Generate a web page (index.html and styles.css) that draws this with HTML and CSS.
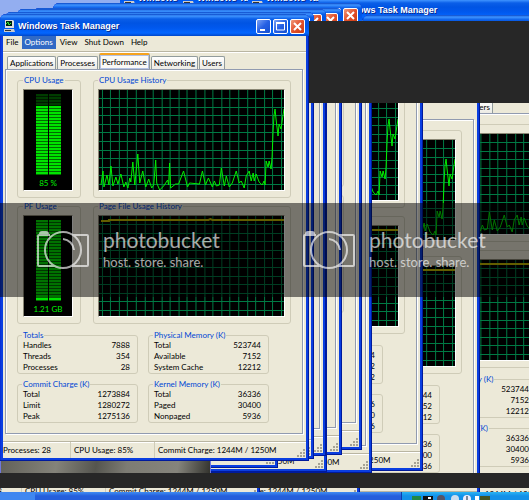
FILE: index.html
```html
<!DOCTYPE html>
<html lang="en">
<head>
<meta charset="utf-8">
<title>Windows Task Manager</title>
<link rel="stylesheet" href="styles.css">
</head>
<body>
<main class="desktop" id="desktop">
  <div class="windows" id="windows"></div>
  <div class="block block-top"></div>
  <div class="block block-bottom"></div>
  <footer class="taskbar"><div class="task"></div><div class="tray">
    <svg width="80" height="5" viewBox="0 0 80 5" aria-hidden="true"><rect x="2" y="1" width="9" height="4" fill="#284"/><path d="M13 1h10v4H13z" fill="#111"/><path d="M18 2h3v2h-3z" fill="#fff"/><circle cx="31" cy="4" r="4" fill="#556"/><circle cx="45" cy="4" r="4" fill="#cde"/><circle cx="57" cy="4" r="4" fill="#eef"/><path d="M57 1v4" stroke="#123"/><path d="M65 5V1h4v4" fill="#fff"/><path d="M70 1h10v4H70z" fill="#452"/></svg>
  </div></footer>
  <section class="watermark">
    <div class="brand"></div>
    <div class="brand"></div>
  </section>
</main>

<template id="photo-template"><div class="photo"></div></template>

<template id="brand-template">
  <svg class="camera" width="52" height="40" viewBox="0 0 52 40" fill="none" stroke="#fff" stroke-width="2" aria-hidden="true">
    <path d="M2 4Q2 1 5 1h4Q12 1 12 4z" fill="#fff" stroke="none"/>
    <path d="M13 5H2Q1 5 1 6v29q0 1 1 1h15M34 36h16q1 0 1-1V6q0-1-1-1H36"/>
    <circle cx="26" cy="20" r="18"/>
    <path d="M26 9a12 12 0 0 1 11 11"/>
  </svg>
  <div class="words"><div class="name">photobucket</div><div class="motto">host. store. share.</div></div>
</template>

<template id="window-template">
  <section class="window">
    <header class="titlebar">
      <svg class="app-icon" width="11" height="12" viewBox="0 0 11 12" aria-hidden="true"><path d="M1 0h8l1 1v7H1z" fill="#ddd"/><path d="M2 1h6v5H2z" fill="#021"/><path d="M2 4l2-2 1 3 2-2" stroke="#3e3" fill="none"/><path d="M0 9h10l1 3H0z" fill="#ccc"/><path d="M1 10.500h6" stroke="#333"/></svg>
      <h1 class="title">Windows Task Manager</h1>
      <div class="buttons">
        <button class="cap" aria-label="Minimize"><svg width="13" height="13" viewBox="0 0 13 13"><path d="M3 9h5v2H3z" fill="#fff"/></svg></button>
        <button class="cap" aria-label="Maximize"><svg width="13" height="13" viewBox="0 0 13 13"><path d="M2.500 3h8v7h-8z" fill="none" stroke="#fff"/><path d="M2 2h9v2H2z" fill="#fff"/></svg></button>
        <button class="cap close" aria-label="Close"><svg width="13" height="13" viewBox="0 0 13 13"><path d="M3 3l7 7M10 3l-7 7" stroke="#fff" stroke-width="2"/></svg></button>
      </div>
    </header>
    <div class="client">
      <nav class="menu"><button>File</button><button class="on">Options</button><button>View</button><button>Shut Down</button><button>Help</button></nav>
      <div class="tabs"><button>Applications</button><button>Processes</button><button class="active">Performance</button><button>Networking</button><button>Users</button></div>
      <div class="panel">
        <div class="charts">
          <fieldset><legend>CPU Usage</legend><div class="well"><svg class="cpu-meter" viewBox="0 0 48 100"></svg><span class="reading">85 %</span></div></fieldset>
          <fieldset><legend>CPU Usage History</legend><div class="well"><svg class="cpu-history" viewBox="0 0 186 100" preserveAspectRatio="none"></svg></div></fieldset>
          <fieldset><legend>PF Usage</legend><div class="well"><svg class="pf-meter" viewBox="0 0 48 100"></svg><span class="reading">1.21 GB</span></div></fieldset>
          <fieldset><legend>Page File Usage History</legend><div class="well"><svg class="pf-history" viewBox="0 0 186 100" preserveAspectRatio="none"></svg></div></fieldset>
        </div>
        <div class="stats">
          <fieldset><legend>Totals</legend><table><tr><th>Handles</th><td>7888</td></tr><tr><th>Threads</th><td>354</td></tr><tr><th>Processes</th><td>28</td></tr></table></fieldset>
          <fieldset><legend>Physical Memory (K)</legend><table><tr><th>Total</th><td>523744</td></tr><tr><th>Available</th><td>7152</td></tr><tr><th>System Cache</th><td>12212</td></tr></table></fieldset>
          <fieldset><legend>Commit Charge (K)</legend><table><tr><th>Total</th><td>1273884</td></tr><tr><th>Limit</th><td>1280272</td></tr><tr><th>Peak</th><td>1275136</td></tr></table></fieldset>
          <fieldset><legend>Kernel Memory (K)</legend><table><tr><th>Total</th><td>36336</td></tr><tr><th>Paged</th><td>30400</td></tr><tr><th>Nonpaged</th><td>5936</td></tr></table></fieldset>
        </div>
      </div>
      <footer class="status"><span>Processes: 28</span><span>CPU Usage: 85%</span><span>Commit Charge: 1244M / 1250M</span>
        <svg class="grip" width="9" height="9" viewBox="0 0 9 9" fill="#a5a294" aria-hidden="true"><path d="M7 0h2v2H7zM7 3h2v2H7zM7 6h2v2H7zM4 3h2v2H4zM4 6h2v2H4zM1 6h2v2H1z"/></svg>
      </footer>
    </div>
  </section>
</template>
<script src="desktop.js"></script>
</body>
</html>
```

FILE: styles.css
```css
* { box-sizing: border-box; }
body { margin: 0; font: 8px/10px Lato, "Liberation Sans", sans-serif; color: #000; }
button { font: inherit; color: inherit; border: 0; background: none; padding: 0; margin: 0; white-space: nowrap; }
svg { display: block; }

.desktop { position: relative; height: 100vh; overflow: hidden; background: #93aef0; }
.window {
  position: absolute; width: 309px; padding: 0 3px 3px 3px;
  border-radius: 6px 6px 0 0;
  background: #0a3ee0;
  box-shadow: inset -1px -1px #001a9c, inset 1px 0 #0831d9;
}
.titlebar {
  display: flex; align-items: center; gap: 3px; height: 22px; margin: 0 -3px; padding: 2px 4px 0 4px;
  border-radius: 6px 6px 0 0;
  background: linear-gradient(#0a48c8 0, #3f94ff 2px, #0a5ee8 5px, #0054e3 9px, #0058ee 14px, #0366ff 19px, #0046c8 22px);
}
.title { flex: 1; margin: 0; font: bold 9px/14px "Liberation Sans", sans-serif; color: #fff; text-shadow: 1px 1px #0a2a8c; white-space: nowrap; }
.buttons { display: flex; gap: 2px; }
.cap { width: 15px; height: 15px; border: 1px solid #fff; border-radius: 2px; background: linear-gradient(135deg, #7ba2f4, #2660e4 50%, #1650d0); }
.cap.close { background: linear-gradient(135deg, #f09a7c, #e2512c 50%, #c93c12); }

.client { background: #ece9d8; }
.menu { display: flex; height: 16px; padding: 0 2px 2px 0; border-bottom: 1px solid #b9b5a2; box-shadow: 0 1px #fff; }
.menu button { padding: 0 3px; line-height: 13px; }
.menu .on { background: #316ac5; color: #fff; }
.menu button:nth-child(n+3) { padding: 0 3px 0 4px; }

.tabs { display: flex; align-items: flex-end; gap: 1px; height: 17px; padding: 0 4px; }
.tabs button { height: 13px; padding: 0 2px; border: 1px solid #919b9c; border-bottom: 0; border-radius: 2px 2px 0 0; background: linear-gradient(#fff, #ecebe4); }
.tabs .active { height: 16px; border-top: 2px solid #f5a31f; background: #fbfaf6; box-shadow: inset 0 0 0 1px #b4c2e4; }
.panel { margin: 0 3px 7px 2px; padding: 5px 11px 10px 11px; border: 1px solid #919bb0; box-shadow: inset 1px 1px #fff, 1px 1px #fff; }
.charts { display: grid; grid-template-columns: 64px 1fr; gap: 3px 12px; }
fieldset { min-width: 0; margin: 0; padding: 0 4px; border: 1px solid #cfccb8; border-radius: 3px; }
legend { padding: 0 1px; height: 10px; color: #0046d5; white-space: nowrap; }
.charts fieldset { padding: 4px 5px 6px 4px; }
.charts fieldset:nth-child(odd) { padding: 4px 7px 6px 5px; }
.well { position: relative; height: 102px; background: #000; border: 1px solid #8a8775; border-right-color: #fff; border-bottom-color: #fff; }
.well svg { width: 100%; height: 100%; }
.reading { position: absolute; left: 0; right: 0; bottom: 2px; color: #00f000; text-align: center; }

.stats { display: grid; grid-template-columns: 1fr 1fr; gap: 5px 10px; margin: 6px 22px 0 0; }
table { width: 100%; border-collapse: collapse; }
th, td { padding: 0 1px; height: 11px; line-height: 11px; font-weight: normal; text-align: left; }
td { padding-right: 3px; text-align: right; }

.status { display: flex; height: 17px; border-top: 1px solid #b9b5a2; box-shadow: inset 0 1px #fff; line-height: 17px; }
.status span { width: 84px; padding-left: 3px; border-left: 1px solid #cfccb8; white-space: nowrap; }
.status span:first-child { width: 67px; padding-left: 0; border: 0; }
.status .grip { margin: 7px 1px 0 auto; }

.photo { position: absolute; left: 0; top: 400px; width: 211px; height: 74px; border: 1px solid #7078dc; background: linear-gradient(100deg, #5c5b54, #84837a 30%, #55554f 48%, #7d7c74 62%, #85847c 85%, #33332e); }
.block { position: absolute; right: 0; background: #272727; }
.block-top { left: 309px; top: 21px; height: 82px; }
.block-bottom { left: 0; bottom: 12px; height: 15px; }
.taskbar { position: absolute; left: 0; right: 0; bottom: 0; height: 8px; display: flex; justify-content: space-between; background: linear-gradient(#3f8cf3, #245edc 4px); }
.task { flex: 0 0 35px; background: #3f87f0; }
.tray { flex: 0 0 128px; padding: 3px 0 0 8px; border-left: 1px solid #0a3fae; background: linear-gradient(#2ab4f5, #1290e8 4px); }

.watermark { position: absolute; left: 0; top: 203px; width: 100%; height: 94px; display: flex; padding: 27px 0 0 37px; overflow: hidden; background: rgba(0, 0, 0, .5); color: #fff; font-family: Lato, sans-serif; }
.brand { flex: 0 0 266px; display: flex; gap: 14px; opacity: .65; }
.name { font-size: 21px; line-height: 20px; font-weight: 400; }
.motto { margin-top: 4px; font-size: 13px; line-height: 16px; }
```

FILE: desktop.js
```js
// Windows from back to front: left and top of each frame.
const frames = [
  [120, -14], [179, -14], [248, -14], [318, -2], [363, 15],
  [268, 58], [171, 64], [51, 55], [-49, 55], [114, 24],
  [63, 26], [53, 3], [33, 8], [18, 25], [17, 9], [5, 12],
  [-31, 21], "photo", [0, 14]
];

const cpu = "2,95 4,81 5,97 8,85 10,95 12,76 14,96 17,87 19,94 22,84 25,97 27,92 29,98 31,88 32,92 34,72 36,95 39,64 41,93 44,81 47,97 50,89 53,98 55,95 57,70 58,93 61,100 65,96 69,90 70,95 71,73 72,98 77,94 80,94 85,81 89,97 91,93 101,94 104,81 107,95 110,88 114,97 116,91 118,96 121,95 123,78 126,96 128,86 131,97 134,93 138,81 141,93 143,91 146,98 148,86 151,81 153,91 155,83 156,91 158,84 161,92 164,95 166,91 167,95 168,71 170,77 171,71 173,79 174,67 175,42 176,25 177,19 178,29 180,46 181,34 183,39 184,32 186,19";

function grid() {
  let d = "";
  for (let x = 2.5; x < 187; x += 8.6) d += `M${Math.round(x) + 0.5} 0V100`;
  for (let y = 8; y < 100; y += 8.6) d += `M0 ${Math.round(y) + 0.5}H186`;
  return `<path d="${d}" stroke="#007a44" fill="none"/>`;
}

function meter(top, bright, bottom) {
  let out = "";
  for (let y = top; y < bottom; y += 3) {
    const color = y < bright ? "#003c00" : "#00e400";
    out += `<path d="M12 ${y}h12v2H12zM25 ${y}h12v2H25z" fill="${color}"/>`;
    out += `<path d="M12 ${y + 2}h12v1H12zM25 ${y + 2}h12v1H25z" fill="${y < bright ? "#001800" : "#006a00"}"/>`;
  }
  return out;
}

const base = document.getElementById("window-template").content;
base.querySelector(".cpu-meter").innerHTML = meter(4, 14, 84);
base.querySelector(".pf-meter").innerHTML = meter(4, 4, 83);
base.querySelector(".cpu-history").innerHTML = grid() + `<polyline points="${cpu}" fill="none" stroke="#00f000"/>`;
base.querySelector(".pf-history").innerHTML = grid() + `<polyline points="2,5 10,5 10,4 110,4 112,3 114,4 186,4" fill="none" stroke="#c4bc00" stroke-width="2"/>`;

const host = document.getElementById("windows");
for (const frame of frames) {
  if (frame === "photo") {
    host.append(document.getElementById("photo-template").content.cloneNode(true));
    continue;
  }
  const copy = base.cloneNode(true);
  const win = copy.querySelector(".window");
  win.style.left = frame[0] + "px";
  win.style.top = frame[1] + "px";
  host.append(copy);
}

for (const brand of document.querySelectorAll(".brand")) {
  brand.append(document.getElementById("brand-template").content.cloneNode(true));
}
```
